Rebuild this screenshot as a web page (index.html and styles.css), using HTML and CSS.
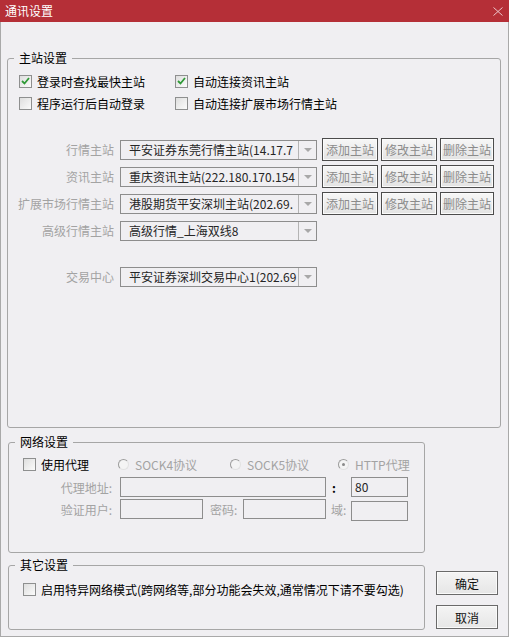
FILE: index.html
```html
<!DOCTYPE html>
<html lang="zh-CN">
<head>
    <meta charset="UTF-8">
    <title>通讯设置</title>
    <link rel="stylesheet" href="styles.css">
</head>
<body>
    <div class="window">
        <div class="titlebar">
            <span class="title">通讯设置</span>
            <svg class="close" width="10" height="9" viewBox="0 0 10 9">
                <path d="M0.5 0.5 L9.5 8.5 M9.5 0.5 L0.5 8.5" stroke="#ebc5c8" stroke-width="1" fill="none"/>
            </svg>
        </div>

        <div class="client">
            <!-- 主站设置 -->
            <fieldset class="group group-main">
                <legend>主站设置</legend>
                <div class="checks">
                    <label class="check">
                        <span class="box"><svg width="9" height="8" viewBox="0 0 9 8"><path d="M1 4 L3.5 6.5 L8 1" stroke="#2f9a37" stroke-width="1.8" fill="none"/></svg></span>
                        登录时查找最快主站
                    </label>
                    <label class="check">
                        <span class="box"><svg width="9" height="8" viewBox="0 0 9 8"><path d="M1 4 L3.5 6.5 L8 1" stroke="#2f9a37" stroke-width="1.8" fill="none"/></svg></span>
                        自动连接资讯主站
                    </label>
                    <label class="check"><span class="box"></span>程序运行后自动登录</label>
                    <label class="check"><span class="box"></span>自动连接扩展市场行情主站</label>
                </div>

                <div class="stations">
                    <div class="station-row">
                        <span class="field-label">行情主站</span>
                        <div class="combo"><span class="combo-text">平安证券东莞行情主站(14.17.7</span><span class="combo-arrow"><i></i></span></div>
                        <div class="station-buttons">
                            <button class="btn btn-add">添加主站</button>
                            <button class="btn btn-edit">修改主站</button>
                            <button class="btn btn-del">删除主站</button>
                        </div>
                    </div>
                    <div class="station-row">
                        <span class="field-label">资讯主站</span>
                        <div class="combo"><span class="combo-text">重庆资讯主站(222.180.170.154</span><span class="combo-arrow"><i></i></span></div>
                        <div class="station-buttons">
                            <button class="btn btn-add">添加主站</button>
                            <button class="btn btn-edit">修改主站</button>
                            <button class="btn btn-del">删除主站</button>
                        </div>
                    </div>
                    <div class="station-row">
                        <span class="field-label">扩展市场行情主站</span>
                        <div class="combo"><span class="combo-text">港股期货平安深圳主站(202.69.</span><span class="combo-arrow"><i></i></span></div>
                        <div class="station-buttons">
                            <button class="btn btn-add">添加主站</button>
                            <button class="btn btn-edit">修改主站</button>
                            <button class="btn btn-del">删除主站</button>
                        </div>
                    </div>
                    <div class="station-row">
                        <span class="field-label">高级行情主站</span>
                        <div class="combo"><span class="combo-text">高级行情_上海双线8</span><span class="combo-arrow"><i></i></span></div>
                    </div>
                    <div class="station-row trade">
                        <span class="field-label">交易中心</span>
                        <div class="combo"><span class="combo-text">平安证券深圳交易中心1(202.69</span><span class="combo-arrow"><i></i></span></div>
                    </div>
                </div>
            </fieldset>

            <div class="bottom">
                <div class="bottom-left">
                    <!-- 网络设置 -->
                    <fieldset class="group group-net">
                        <legend>网络设置</legend>
                        <div class="proxy-row">
                            <label class="check proxy-check"><span class="box"></span>使用代理</label>
                            <span class="radio radio-s4"><span class="radio-dot"></span>SOCK4协议</span>
                            <span class="radio radio-s5"><span class="radio-dot"></span>SOCK5协议</span>
                            <span class="radio"><span class="radio-dot on"></span>HTTP代理</span>
                        </div>
                        <div class="form-row">
                            <span class="form-label">代理地址:</span>
                            <span class="input input-addr"></span>
                            <span class="colon">:</span>
                            <span class="input input-port">80</span>
                        </div>
                        <div class="form-row">
                            <span class="form-label">验证用户:</span>
                            <span class="input input-short"></span>
                            <span class="form-label pass-label">密码:</span>
                            <span class="input input-short"></span>
                            <span class="form-label domain-label">域:</span>
                            <span class="input input-port domain-input"></span>
                        </div>
                    </fieldset>

                    <!-- 其它设置 -->
                    <fieldset class="group group-other">
                        <legend>其它设置</legend>
                        <label class="check other-check"><span class="box"></span>启用特异网络模式(跨网络等,部分功能会失效,通常情况下请不要勾选)</label>
                    </fieldset>
                </div>

                <div class="actions">
                    <button class="btn-main">确定</button>
                    <button class="btn-main">取消</button>
                </div>
            </div>
        </div>
    </div>
</body>
</html>
```

FILE: styles.css
```css
body {
    margin: 0;
    font-family: "Noto Sans CJK SC", sans-serif;
    font-size: 12px;
    color: #000;
    background: #f0eff2;
}

.window {
    width: 509px;
    height: 637px;
    display: flex;
    flex-direction: column;
    background: #f0eff2;
}

.titlebar {
    height: 22px;
    flex-shrink: 0;
    background: #b52f37;
    color: #fff;
    display: flex;
    align-items: center;
    justify-content: space-between;
    padding: 0 6px 0 5px;
}

.title {
    line-height: 22px;
}

.client {
    flex: 1;
    border: 1px solid #a9a9a9;
    border-top: 0;
    padding: 29px 7px 0 6px;
    display: flex;
    flex-direction: column;
}

/* group boxes */
.group {
    margin: 0;
    padding: 0;
    border: 1px solid #a6a6a6;
    border-radius: 3px;
    min-width: 0;
    box-sizing: border-box;
}

.group legend {
    margin-left: 6px;
    padding: 0 5px;
    line-height: 14px;
    font-size: 12px;
}

.group-main {
    height: 377px;
}

/* checkboxes */
.checks {
    display: grid;
    grid-template-columns: 156px auto;
    padding: 5px 0 0 11px;
}

.check {
    display: flex;
    align-items: center;
    height: 22px;
    gap: 5px;
    white-space: nowrap;
}

.box {
    width: 13px;
    height: 13px;
    box-sizing: border-box;
    border: 1px solid #8e8f8f;
    background: linear-gradient(135deg, #dedede, #fbfbfb);
    display: flex;
    align-items: center;
    justify-content: center;
    flex-shrink: 0;
}

/* station rows */
.stations {
    margin-top: 22px;
}

.station-row {
    display: flex;
    align-items: center;
    height: 27px;
}

.station-row.trade {
    margin-top: 19px;
}

.field-label {
    width: 106px;
    margin-right: 6px;
    text-align: right;
    color: #a3a3a3;
    white-space: nowrap;
}

.combo {
    width: 197px;
    height: 20px;
    box-sizing: border-box;
    border: 1px solid #8d8d8d;
    display: flex;
}

.combo-text {
    flex: 1;
    overflow: hidden;
    white-space: nowrap;
    padding-left: 8px;
    line-height: 18px;
    color: #262626;
}

.combo-arrow {
    width: 17px;
    border-left: 1px solid #b4b4b4;
    display: flex;
    align-items: center;
    justify-content: center;
}

.combo-arrow i {
    width: 0;
    height: 0;
    border-left: 4px solid transparent;
    border-right: 4px solid transparent;
    border-top: 4px solid #a8a8a8;
}

.station-buttons {
    display: flex;
    gap: 3px;
    margin-left: 5px;
}

.btn {
    height: 23px;
    width: 56px;
    padding: 0;
    box-sizing: border-box;
    border: 1px solid #4c4c4c;
    border-radius: 0;
    box-shadow: inset 0 0 0 1px #fbfbfb;
    background: linear-gradient(#f7f7f7, #e3e3e3);
    color: #8b8b8b;
    font: inherit;
}

.btn-del {
    width: 54px;
}

/* bottom area */
.bottom {
    display: flex;
    gap: 11px;
    margin-top: 7px;
    padding-left: 1px;
}

.bottom-left {
    width: 417px;
    display: flex;
    flex-direction: column;
    gap: 5px;
}

.group-net {
    height: 118px;
}

.group-other {
    height: 72px;
}

.proxy-row {
    display: flex;
    align-items: center;
    height: 24px;
    margin-top: 3px;
    padding-left: 14px;
}

.proxy-check {
    width: 95px;
}

.radio {
    display: flex;
    align-items: center;
    color: #a3a3a3;
    white-space: nowrap;
}

.radio-s4 {
    width: 112px;
}

.radio-s5 {
    width: 108px;
}

.radio-dot {
    width: 11px;
    height: 11px;
    box-sizing: border-box;
    border-radius: 50%;
    border: 1px solid;
    border-color: #9c9c9c #e2e2e2 #e2e2e2 #9c9c9c;
    background: #f4f4f4;
    margin-right: 6px;
    display: flex;
    align-items: center;
    justify-content: center;
}

.radio-dot.on::after {
    content: "";
    width: 3px;
    height: 3px;
    border-radius: 50%;
    background: #8a8a8a;
}

.form-row {
    display: flex;
    align-items: center;
    height: 22px;
}

.form-label {
    width: 103px;
    margin-right: 8px;
    text-align: right;
    color: #a3a3a3;
    white-space: nowrap;
}

.input {
    height: 20px;
    box-sizing: border-box;
    border: 1px solid #8d8d8d;
    line-height: 18px;
    padding-left: 3px;
    color: #262626;
}

.input-addr {
    width: 206px;
}

.input-short {
    width: 83px;
}

.input-port {
    width: 57px;
}

.colon {
    width: 19px;
    padding-left: 6px;
    font-weight: bold;
}

.pass-label {
    width: 30px;
    margin-left: 7px;
    margin-right: 3px;
    text-align: left;
}

.domain-label {
    width: 15px;
    margin-left: 5px;
    margin-right: 5px;
    text-align: left;
}

.domain-input {
    margin-top: 3px;
}

.other-check {
    margin-top: 6px;
    padding-left: 14px;
}

/* dialog buttons */
.actions {
    width: 62px;
    display: flex;
    flex-direction: column;
    justify-content: flex-end;
    gap: 10px;
    padding-bottom: 1px;
}

.btn-main {
    height: 24px;
    width: 62px;
    padding: 0;
    box-sizing: border-box;
    border: 1px solid #6a6a6a;
    border-radius: 0;
    box-shadow: inset 0 0 0 1px #fafafa;
    background: linear-gradient(#f4f4f4, #e6e6e6);
    color: #111;
    font: inherit;
}
```
